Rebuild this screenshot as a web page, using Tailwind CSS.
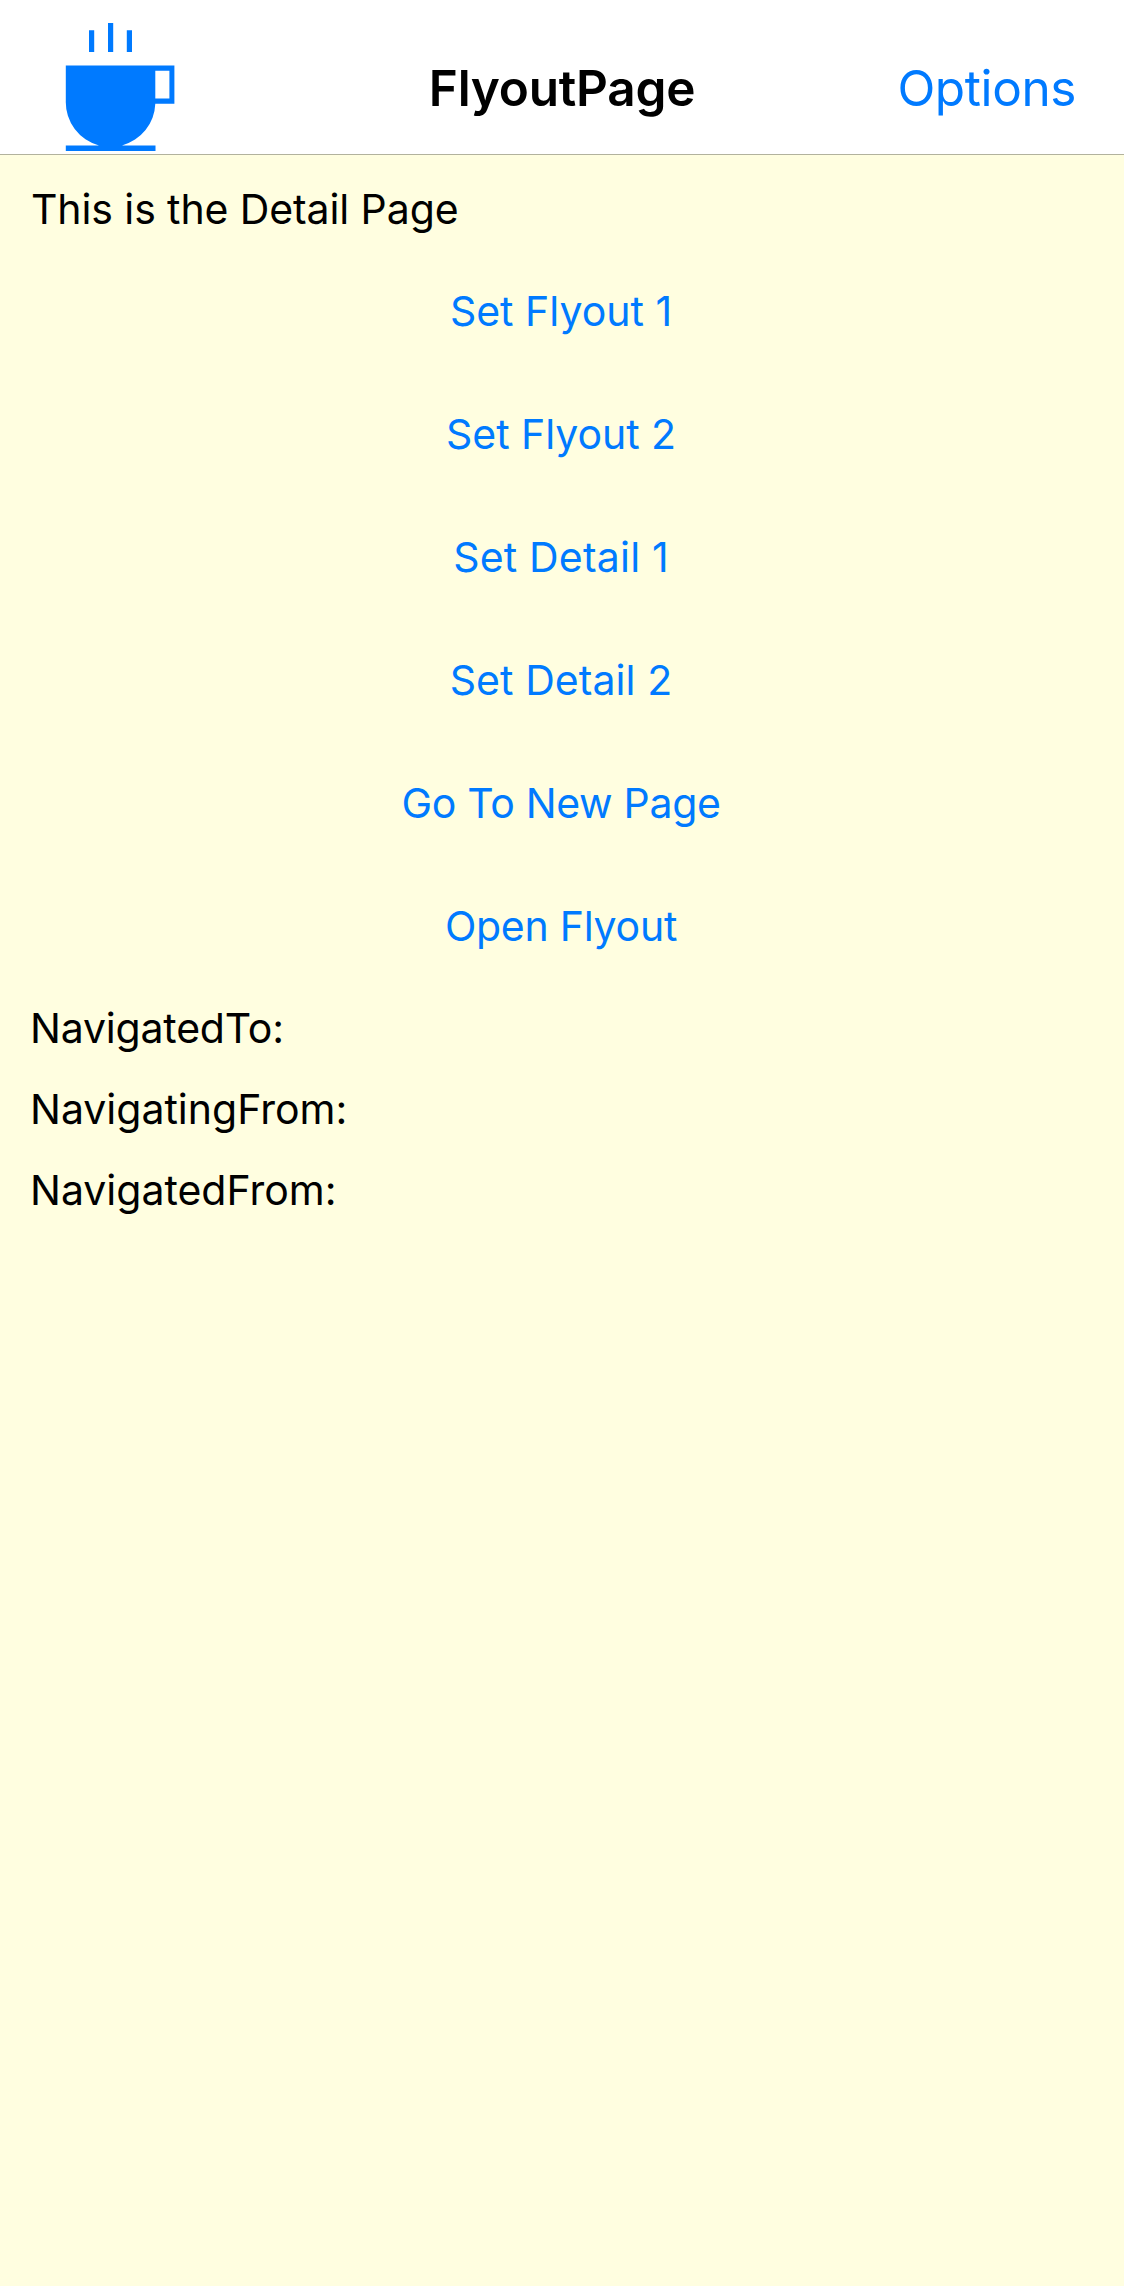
<!DOCTYPE html>
<html lang="en">
<head>
<meta charset="utf-8">
<title>FlyoutPage</title>
<script src="https://cdn.jsdelivr.net/npm/@tailwindcss/browser@4"></script>
</head>
<body class="flex min-h-screen flex-col bg-[#fffee0] font-['Inter',sans-serif] text-[41px] text-black">
  <header class="grid h-[155px] grid-cols-[1fr_auto_1fr] border-b border-[#b2b29d] bg-white text-[49.5px] leading-[60px]">
    <button class="justify-self-start pl-[65px]" aria-label="Menu">
      <svg class="block h-[154px] w-[110px]" viewBox="65 0 110 154" fill="#007aff">
        <path d="M89 30.2h5.2v21.8H89zM108 23h5.2v29H108zM126.8 30.2h5.2v21.8h-5.2z"/>
        <path fill-rule="evenodd" d="M65.8 65.5H174.4v38.2H155.3A44.8 44.8 0 0 1 122 145.4H155.5v5.6H65.8v-5.6H99A44.8 44.8 0 0 1 65.8 101zM155.3 70.7v27.7h14.1V70.7z"/>
      </svg>
    </button>
    <h1 class="pt-[58px] font-semibold tracking-[-0.25px]">FlyoutPage</h1>
    <button class="flex justify-end pt-[58px] pr-12 tracking-[-0.4px] text-[#007aff]">Options</button>
  </header>
  <main class="flex flex-col gap-[31px] pr-8 pl-[30px] pt-[29px] leading-[50px]">
    <p class="pl-px tracking-[-0.1px]">This is the Detail Page</p>
    <button class="h-[92px] text-[#007aff]">Set Flyout 1</button>
    <button class="h-[92px] tracking-[-0.05px] text-[#007aff]">Set Flyout 2</button>
    <button class="h-[92px] tracking-[0.2px] text-[#007aff]">Set Detail 1</button>
    <button class="h-[92px] tracking-[0.08px] text-[#007aff]">Set Detail 2</button>
    <button class="h-[92px] tracking-[-0.31px] text-[#007aff]">Go To New Page</button>
    <button class="h-[92px] tracking-[-0.25px] text-[#007aff]">Open Flyout</button>
    <p class="tracking-[-0.19px]">NavigatedTo:</p>
    <p>NavigatingFrom:</p>
    <p>NavigatedFrom:</p>
  </main>
</body>
</html>
